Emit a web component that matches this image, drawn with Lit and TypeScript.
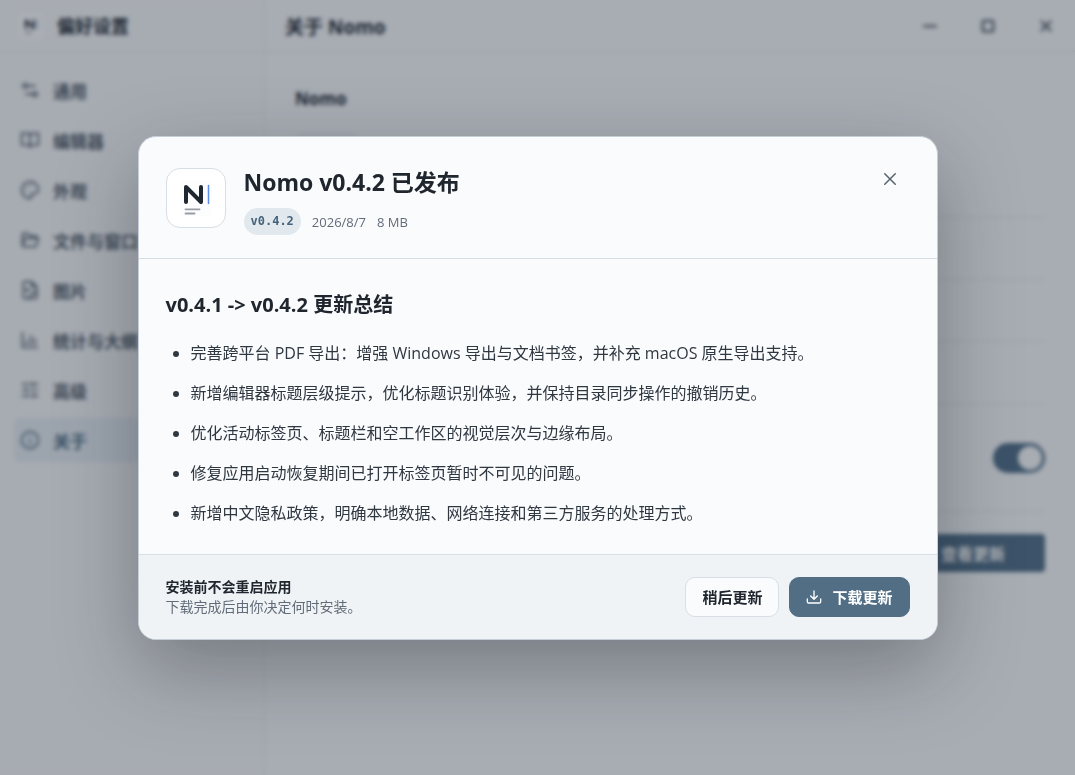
import { LitElement, html, css, svg, TemplateResult } from "lit";
import { customElement, state } from "lit/decorators.js";
import { classMap } from "lit/directives/class-map.js";

const icon = (body: TemplateResult, size = 20, stroke = 2) => html`<svg
  width=${size} height=${size} viewBox="0 0 24 24" fill="none" stroke="currentColor"
  stroke-width=${stroke} stroke-linecap="round" stroke-linejoin="round" aria-hidden="true">${body}</svg>`;

const logo = (width: number, height: number) => html`<svg width=${width} height=${height} viewBox="0 0 32 36" fill="none"
  stroke-linecap="round" stroke-linejoin="round" aria-hidden="true">
  <rect width="32" height="36" rx="4" fill="#fdfdfe" />
  <path d="M6 22V7L21 22V7" stroke="#1f2730" stroke-width="4" />
  <path d="M28.5 5.5V23.500" stroke="#5b8def" stroke-width="1.500" />
  <path d="M5.500 29.300H19.500M5.500 33.500H14.500" stroke="#9a9ca6" stroke-width="1.800" />
</svg>`;

const NAV: { label: string; body: TemplateResult }[] = [
  { label: "通用", body: svg`<circle cx="6" cy="7" r="2.500"/><path d="M9 7h9"/><circle cx="18" cy="17" r="2.500"/><path d="M15 17H7"/>` },
  { label: "编辑器", body: svg`<path d="M12 6v14M2 4h7a3 3 0 0 1 3 3 3 3 0 0 1 3-3h7v14h-7a3 3 0 0 0-3 3 3 3 0 0 0-3-3H2z"/>` },
  { label: "外观", body: svg`<path d="M12 2a10 10 0 0 0 0 20c1.800 0 2.200-1.500 1.600-2.700-.8-1.600.2-3.300 2-3.300H18a4 4 0 0 0 4-4.500C21.500 6 17.500 2 12 2z"/><path d="M8 8h.01M13 6.500h.01M7 13h.01"/>` },
  { label: "文件与窗口", body: svg`<path d="M3 19V5a1 1 0 0 1 1-1h5l3 3h7a1 1 0 0 1 1 1v2M3 19l3-9h16l-2.500 9a1 1 0 0 1-1 1H4a1 1 0 0 1-1-1z"/>` },
  { label: "图片", body: svg`<path d="M14 2H6a2 2 0 0 0-2 2v16a2 2 0 0 0 2 2h12a2 2 0 0 0 2-2V8zM14 2v6h6"/><circle cx="9" cy="12" r="1.500"/><path d="M20 17l-3-3-7 8"/>` },
  { label: "统计与大纲", body: svg`<path d="M3 3v18h18M8 17v-4M13 17V7M18 17v-6"/>` },
  { label: "高级", body: svg`<path d="M3 5h7M14 5h7M3 12h5M12 12h9M3 19h9M16 19h5M14 3v4M8 10v4M16 17v4"/>` },
  { label: "关于", body: svg`<circle cx="12" cy="12" r="10"/><path d="M12 16v-4M12 8h.01"/>` },
];

const NOTES = [
  "完善跨平台 PDF 导出：增强 Windows 导出与文档书签，并补充 macOS 原生导出支持。",
  "新增编辑器标题层级提示，优化标题识别体验，并保持目录同步操作的撤销历史。",
  "优化活动标签页、标题栏和空工作区的视觉层次与边缘布局。",
  "修复应用启动恢复期间已打开标签页暂时不可见的问题。",
  "新增中文隐私政策，明确本地数据、网络连接和第三方服务的处理方式。",
];

const base = css`
  *, *::before, *::after { box-sizing: border-box; }
  h1, h2, h3, p, ul { margin: 0; padding: 0; }
  button { font: inherit; color: inherit; border: 0; background: none; padding: 0; cursor: pointer; }
  svg { display: block; flex: none; }
`;

@customElement("preferences-window")
export class PreferencesWindow extends LitElement {
  static styles = [base, css`
    :host { display: grid; grid-template-columns: 265px minmax(0, 1fr); min-height: 100vh; background: #fafbfc; color: #252c35; }
    .side { border-right: 1px solid #e8ecf0; background: #f9fafb; }
    .brand { display: flex; align-items: center; gap: 13px; height: 52px; padding: 0 18px; border-bottom: 1px solid #e6eaee; }
    .mark { display: grid; place-items: center; width: 26px; height: 26px; border-radius: 6px; background: #fff; }
    .brand-name { font-size: 18px; line-height: 24px; font-weight: 700; }
    .nav { display: grid; gap: 6px; padding: 16px 14px; }
    .item { display: flex; align-items: center; gap: 13px; height: 44px; padding: 0 6px; border-radius: 6px; color: #56606c; font-size: 17px; font-weight: 600; text-decoration: none; }
    .item.active { background: #e9eff4; color: #4f6d84; }
    .bar { display: flex; align-items: center; justify-content: space-between; height: 52px; padding: 0 20px; border-bottom: 1px solid #e6eaee; }
    .bar-title { font-size: 19px; font-weight: 700; }
    .wins { display: flex; gap: 40px; color: #59616b; }
    .content { padding: 35px 30px; }
    .name { font-size: 17px; line-height: 24px; font-weight: 700; }
    .chip { width: 64px; height: 24px; margin-top: 22px; border-radius: 6px; background: #f0f2f7; }
    .rows { margin-top: 22px; }
    .row { height: 62px; border-bottom: 1px solid #e6e9ed; }
    .row.first { height: 39px; }
    .row.tall { display: flex; align-items: center; justify-content: flex-end; height: 108px; }
    .switch { appearance: none; width: 52px; height: 30px; margin: 0; padding: 3px; border-radius: 15px; background: #55728a; }
    .switch::before { content: ""; display: block; width: 24px; height: 24px; margin-left: 22px; border-radius: 12px; background: #fafbfc; }
    .actions { display: flex; justify-content: flex-end; padding-top: 22px; }
    .check { height: 38px; padding: 0 40px; border-radius: 4px; background: #55728a; color: #fff; font-size: 16px; font-weight: 600; }
  `];

  render() {
    return html`
      <aside class="side">
        <div class="brand"><span class="mark">${logo(16, 18)}</span><span class="brand-name">偏好设置</span></div>
        <nav class="nav">
          ${NAV.map((n, i) => html`<a href="#" class=${classMap({ item: true, active: i === NAV.length - 1 })}>${icon(n.body)}${n.label}</a>`)}
        </nav>
      </aside>
      <main>
        <header class="bar">
          <h1 class="bar-title">关于 Nomo</h1>
          <div class="wins">
            <button aria-label="最小化">${icon(svg`<path d="M4 12h16"/>`, 18, 3)}</button>
            <button aria-label="最大化">${icon(svg`<rect x="5" y="5" width="14" height="14" rx="1"/>`, 18, 3)}</button>
            <button aria-label="关闭">${icon(svg`<path d="M6 6l12 12M18 6L6 18"/>`, 18, 3)}</button>
          </div>
        </header>
        <section class="content">
          <h2 class="name">Nomo</h2>
          <div class="chip"></div>
          <div class="rows">
            <div class="row first"></div>
            <div class="row"></div>
            <div class="row"></div>
            <div class="row"></div>
            <div class="row tall"><input class="switch" type="checkbox" role="switch" aria-label="自动检查更新" checked /></div>
          </div>
          <div class="actions"><button class="check">查看更新</button></div>
        </section>
      </main>`;
  }
}

@customElement("update-dialog")
export class UpdateDialog extends LitElement {
  static styles = [base, css`
    :host { display: block; width: min(800px, 100%); color: #20262e; }
    .card { overflow: hidden; border: 1px solid #c5ced8; border-radius: 18px; background: #fafbfd; box-shadow: 0 28px 80px rgba(20, 26, 32, 0.34); }
    .head { display: flex; align-items: flex-start; gap: 18px; padding: 31px 27px 23px; border-bottom: 1px solid #d5dde5; }
    .app { display: grid; place-items: center; width: 60px; height: 60px; border: 1px solid #d8dee5; border-radius: 14px; background: #fff; }
    .info { flex: 1; min-width: 0; }
    .title { font-size: 23px; line-height: 28px; font-weight: 700; }
    .meta { display: flex; align-items: center; gap: 11px; margin-top: 12px; color: #626c78; font-size: 13px; line-height: 27px; }
    .date { padding-top: 2px; line-height: 25px; }
    .pill { padding: 0 7px; border-radius: 14px; background: #e1e8ee; color: #45637b; font-family: "DejaVu Sans Mono", monospace; font-size: 12px; font-weight: 700; }
    .close { display: grid; place-items: center; width: 40px; height: 40px; margin: -9px 0 0; color: #59636e; }
    .body { padding: 31px 27px 27px; }
    .subtitle { font-size: 20px; line-height: 30px; font-weight: 700; }
    .notes { display: grid; gap: 12px; margin-top: 19px; padding-left: 25px; color: #2f3740; font-size: 16px; line-height: 28px; }
    .foot { display: flex; align-items: center; justify-content: space-between; gap: 16px; padding: 22px 27px; border-top: 1px solid #d8dee5; background: #eff3f6; }
    .hint { font-size: 14px; line-height: 20px; color: #626c78; }
    .hint-title { font-weight: 600; color: #20262e; }
    .buttons { display: flex; gap: 10px; }
    .btn { display: flex; align-items: center; gap: 10px; height: 40px; padding: 0 16px; border: 1px solid #d8dee5; border-radius: 10px; background: #fafbfd; font-size: 15px; font-weight: 600; }
    .btn.primary { border-color: #526e85; background: #526e85; color: #fff; }
  `];

  render() {
    return html`
      <section class="card" role="dialog" aria-modal="true" aria-labelledby="title">
        <header class="head">
          <div class="app">${logo(32, 36)}</div>
          <div class="info">
            <h2 class="title" id="title">Nomo v0.4.2 已发布</h2>
            <div class="meta"><span class="pill">v0.4.2</span><span class="date">2026/8/7</span><span class="date">8 MB</span></div>
          </div>
          <button class="close" aria-label="关闭" @click=${() => this.dispatchEvent(new Event("dismiss"))}>
            ${icon(svg`<path d="M5 5l14 14M19 5L5 19"/>`, 18, 2)}
          </button>
        </header>
        <div class="body">
          <h3 class="subtitle">v0.4.1 -&gt; v0.4.2 更新总结</h3>
          <ul class="notes">${NOTES.map((n) => html`<li>${n}</li>`)}</ul>
        </div>
        <footer class="foot">
          <div class="hint"><p class="hint-title">安装前不会重启应用</p><p>下载完成后由你决定何时安装。</p></div>
          <div class="buttons">
            <button class="btn" @click=${() => this.dispatchEvent(new Event("dismiss"))}>稍后更新</button>
            <button class="btn primary">${icon(svg`<path d="M12 3v12M7 10.500l5 5 5-5M2 15v4a2 2 0 0 0 2 2h16a2 2 0 0 0 2-2v-4"/>`, 16, 2)}下载更新</button>
          </div>
        </footer>
      </section>`;
  }
}

@customElement("app-root")
export class AppRoot extends LitElement {
  @state() private open = true;

  static styles = [base, css`
    :host { display: block; font-family: "Open Sans", "Noto Sans CJK SC", sans-serif; }
    .overlay { position: fixed; inset: 0; display: grid; place-items: center; padding: 24px; background: rgba(15, 25, 42, 0.35); backdrop-filter: blur(2px); }
  `];

  render() {
    return html`
      <preferences-window></preferences-window>
      ${this.open ? html`<div class="overlay"><update-dialog @dismiss=${() => (this.open = false)}></update-dialog></div>` : null}`;
  }
}
